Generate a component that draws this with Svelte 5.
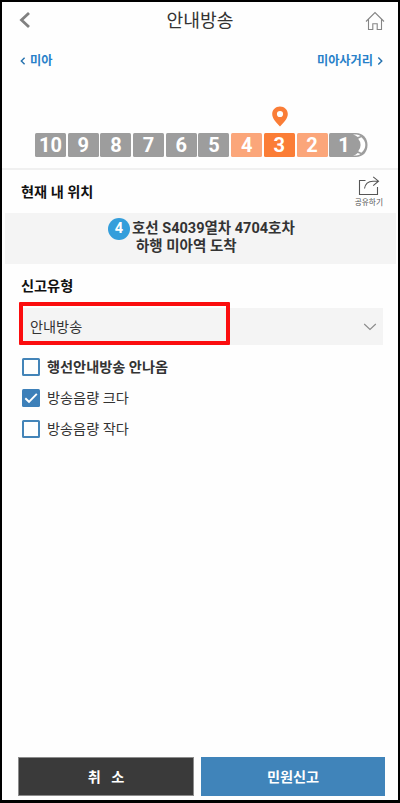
<script lang="ts">
    type Car = { no: number, level?: string }

    let cars: Car[] = [
        { no: 10 },
        { no: 9 },
        { no: 8 },
        { no: 7 },
        { no: 6 },
        { no: 5 },
        { no: 4, level: "near" },
        { no: 3, level: "here" },
        { no: 2, level: "near" }
    ]

    let options = $state([
        { label: "행선안내방송 안나옴", checked: false, strong: true },
        { label: "방송음량 크다", checked: true, strong: false },
        { label: "방송음량 작다", checked: false, strong: false }
    ])
</script>

<div class="screen">
    <header>
        <svg class="back" width="12" height="18" viewBox="0 0 12 18">
            <path d="M10 2 L2.5 9 L10 16" fill="none" stroke="#808080" stroke-width="2.8" />
        </svg>
        <h1>안내방송</h1>
        <svg class="home" width="20" height="20" viewBox="0 0 20 20">
            <path d="M1 10.5 L10 1.5 L19 10.5 M3.5 8.5 V18.5 H7.8 V12.8 H12.2 V18.5 H16.5 V8.5" fill="none" stroke="#858585" stroke-width="1.1" />
        </svg>
    </header>

    <nav>
        <a href="#prev">
            <svg width="6" height="8" viewBox="0 0 6 8"><path d="M4.6 .7 L1.3 4 L4.6 7.3" /></svg>
            미아
        </a>
        <a href="#next">
            미아사거리
            <svg width="6" height="8" viewBox="0 0 6 8"><path d="M1.3 .5 L4.8 4 L1.3 7.5" /></svg>
        </a>
    </nav>

    <div class="train">
        {#each cars as car}
            <div class="car {car.level ?? ''}">
                {car.no}
                {#if car.level == "here"}
                    <svg class="pin" width="16" height="21" viewBox="0 0 16 21">
                        <path d="M8 .5 C3.6 .5 .2 3.8 .2 8 C.2 12.5 4.3 16.6 8 20.6 C11.7 16.6 15.8 12.5 15.8 8 C15.8 3.8 12.4 .5 8 .5 Z M8 4.9 A3.1 3.1 0 1 1 8 11.1 A3.1 3.1 0 1 1 8 4.9 Z" fill="#fa7d37" fill-rule="evenodd" />
                    </svg>
                {/if}
            </div>
        {/each}
        <div class="car front">
            <svg width="39" height="24" viewBox="0 0 39 24">
                <path d="M1.5 0 H27 C34 0 38.5 5 38.5 12 C38.5 19 34 24 27 24 H1.5 Q0 24 0 22.5 V1.5 Q0 0 1.5 0 Z" fill="#9d9d9d" />
                <path d="M24 1.5 H27.5 Q29.8 1.7 31.5 3 L28.7 4 Q26.5 2 24 1.5 Z M32.4 4.3 Q36.3 7.5 36.3 12 Q36.3 16.5 32.4 19.7 L29.2 18.3 Q31.6 15.5 31.6 12 Q31.6 8.5 29.2 5.7 Z M24 22.5 H27.5 Q29.8 22.3 31.5 21 L28.7 20 Q26.5 22 24 22.5 Z" fill="#fff" />
            </svg>
            <span>1</span>
        </div>
    </div>

    <section class="location">
        <h2>현재 내 위치</h2>
        <button class="share">
            <svg width="22" height="20" viewBox="0 0 22 20">
                <path d="M7.5 4.5 H1.5 V18.5 H19.5 V11 M6.5 12.5 Q7.5 5.5 15 5.2 H20.5 M15.2 .8 L20.5 5.2 L15.2 9.6" fill="none" stroke="#555" stroke-width="1.1" />
            </svg>
            <span>공유하기</span>
        </button>
    </section>

    <div class="info">
        <p><i>4</i>호선 S4039열차 4704호차</p>
        <p class="arrival">하행 미아역 도착</p>
    </div>

    <section class="type">
        <h2>신고유형</h2>
        <div class="select">
            <span>안내방송</span>
            <svg width="14" height="8" viewBox="0 0 14 8">
                <path d="M1.2 1 L7 6.5 L12.8 1" fill="none" stroke="#8a8a8a" stroke-width="1.1" />
            </svg>
            <div class="highlight"></div>
        </div>

        <div class="options">
            {#each options as option}
                <label class:strong={option.strong}>
                    <input type="checkbox" bind:checked={option.checked}>
                    <span class="box">
                        {#if option.checked}
                            <svg width="18" height="18" viewBox="0 0 18 18">
                                <path d="M3.3 9.2 L7 12.8 L14.8 4.8" fill="none" stroke="#fff" stroke-width="1.9" />
                            </svg>
                        {/if}
                    </span>
                    {option.label}
                </label>
            {/each}
        </div>
    </section>

    <footer>
        <button class="cancel">취 &nbsp; 소</button>
        <button class="submit">민원신고</button>
    </footer>
</div>

<style>
    .screen {
        box-sizing: border-box;
        width: 400px;
        height: 803px;
        border: 2px solid #000;
        border-bottom-width: 3px;
        display: flex;
        flex-direction: column;
        background: #fefefe;
        color: #333;
        font-family: Roboto, "Noto Sans CJK KR", sans-serif;
        font-size: 14.2px;
    }

    h1, h2, p {
        margin: 0;
    }

    h1 {
        font-size: 18.2px;
        font-weight: 400;
        line-height: 36px;
        padding-top: 2px;
    }

    h2 {
        font-size: 14.2px;
        font-weight: 700;
        line-height: 20px;
        color: #111;
    }

    svg {
        display: block;
        flex: none;
    }

    button {
        border: none;
        padding: 0;
        font: inherit;
        background: none;
    }

    header {
        height: 36px;
        padding: 0 13px 0 17px;
        display: flex;
        align-items: center;
        justify-content: space-between;
    }

    .back {
        margin-right: 4px;
    }

    .home {
        margin-top: 1px;
    }

    nav {
        height: 20px;
        margin-top: 13px;
        padding: 0 15px 0 18px;
        display: flex;
        align-items: center;
        justify-content: space-between;
    }

    nav a {
        display: flex;
        align-items: center;
        gap: 4px;
        font-size: 12.2px;
        font-weight: 700;
        line-height: 20px;
        color: #2881c9;
        text-decoration: none;
    }

    nav path {
        fill: none;
        stroke: #2471ae;
        stroke-width: 1.4;
    }

    .train {
        height: 24px;
        padding: 62px 0 11px 33px;
        display: flex;
        gap: 1.7px;
        border-bottom: 2px solid #f0f0f0;
    }

    .car {
        position: relative;
        width: 31px;
        flex: none;
        border-radius: 1.5px;
        background: #9d9d9d;
        color: #fff;
        font-size: 20px;
        font-weight: 700;
        line-height: 25px;
        text-align: center;
    }

    .near {
        background: #fba67a;
    }

    .here {
        background: #fb7d36;
    }

    .pin {
        position: absolute;
        left: 8px;
        top: -27px;
    }

    .front {
        width: 39px;
        background: none;
    }

    .front span {
        position: absolute;
        left: 9px;
        top: 0;
    }

    .location {
        height: 43px;
        padding: 0 15px 0 19px;
        display: flex;
        align-items: center;
        justify-content: space-between;
    }

    .share {
        display: flex;
        flex-direction: column;
        align-items: center;
        font-size: 7.7px;
        line-height: 11px;
        color: #555;
    }

    .share span {
        margin-top: 1px;
    }

    .info {
        height: 51px;
        margin: 0 2px 0 3px;
        box-sizing: border-box;
        padding-top: 5px;
        background: #f4f4f4;
        font-size: 14.5px;
        font-weight: 700;
        color: #333;
    }

    .info p {
        display: flex;
        align-items: center;
        height: 22px;
        padding-left: 103px;
        line-height: 22px;
        white-space: nowrap;
    }

    .info .arrival {
        height: 13px;
        padding-left: 131px;
    }

    .info i {
        width: 22px;
        height: 22px;
        margin-right: 2px;
        border-radius: 50%;
        background: #349edb;
        color: #fff;
        font-style: normal;
        text-align: center;
    }

    .type {
        flex: 1;
        padding: 12px 15px 0 18px;
    }

    .type h2 {
        padding-left: 1px;
    }

    .select {
        position: relative;
        height: 37px;
        margin-top: 12px;
        padding: 0 6px 0 10px;
        display: flex;
        align-items: center;
        justify-content: space-between;
        background: #f4f4f4;
    }

    .select span {
        padding-bottom: 1px;
    }

    .highlight {
        position: absolute;
        left: -1px;
        top: -6px;
        box-sizing: border-box;
        width: 211px;
        height: 43px;
        border: 4px solid #fb0d0e;
        border-radius: 1px;
    }

    .options {
        display: flex;
        flex-direction: column;
        gap: 13px;
        padding: 13px 0 0 2px;
    }

    label {
        display: flex;
        align-items: center;
        gap: 7px;
        height: 18px;
        line-height: 18px;
    }

    label.strong {
        font-weight: 700;
    }

    input {
        display: none;
    }

    .box {
        box-sizing: border-box;
        width: 18px;
        height: 18px;
        border: 2px solid #4384b8;
        border-radius: 1.5px;
    }

    input:checked + .box {
        border: none;
        background: #3d80b9;
    }

    footer {
        display: flex;
        gap: 7px;
        padding: 0 13px 4px 16px;
    }

    footer button {
        height: 39px;
        padding-bottom: 2px;
        color: #fff;
        font-weight: 700;
    }

    .cancel {
        width: 176px;
        border: 1px solid #8c8c8c;
        background: #3a3a3a;
    }

    .submit {
        flex: 1;
        background: #4084ba;
    }
</style>
